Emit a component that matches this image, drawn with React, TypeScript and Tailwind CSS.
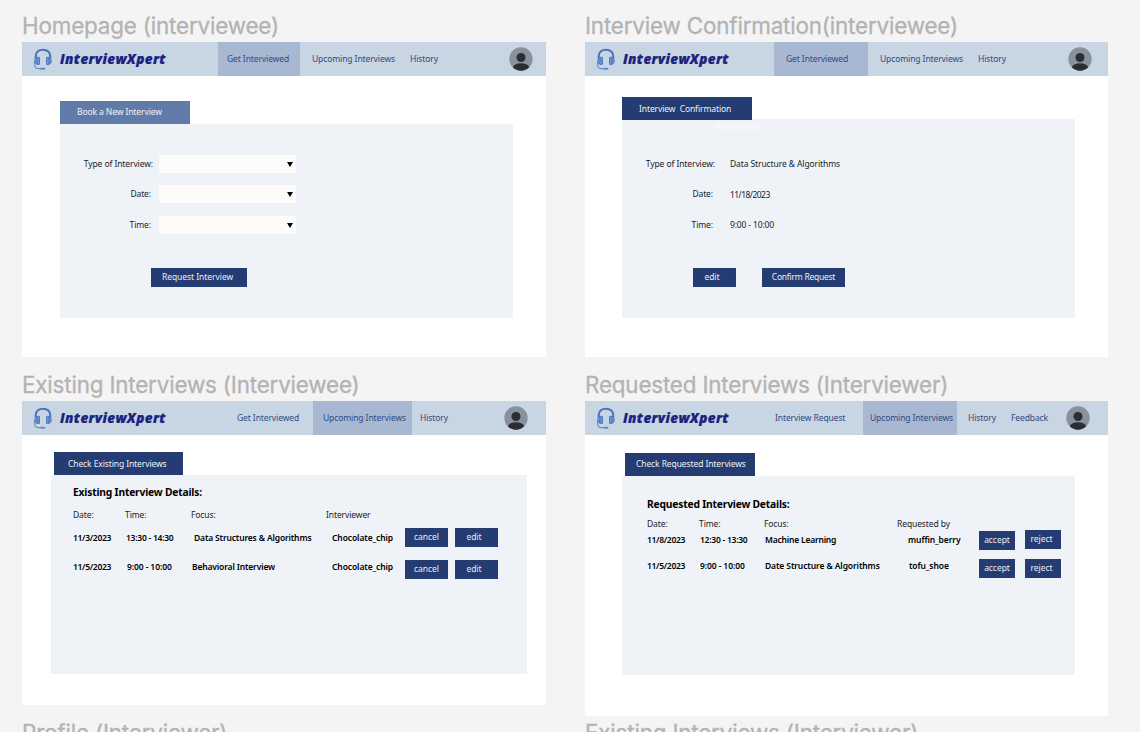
import type { ReactNode } from "react";

function Headset() {
  return (
    <svg viewBox="0 0 18 22" className="ml-[12px] h-[22px] w-[18px] shrink-0" fill="none">
      <path d="M1.7 10.5V8.6C1.7 4.4 4.6 1.7 9 1.7s7.3 2.7 7.3 6.9v1.9" stroke="#4a72bd" strokeWidth="2.1" />
      <path d="M3 9.8Q.6 10.2.6 13q0 2.8 2.4 3.2z" fill="#7fa6de" stroke="#4a72bd" strokeWidth=".8" />
      <rect x="3" y="9.3" width="2.5" height="7.2" rx=".4" fill="#6d96d4" stroke="#4a72bd" strokeWidth=".9" />
      <rect x="12.5" y="9.3" width="2.5" height="7.2" rx=".4" fill="#6d96d4" stroke="#4a72bd" strokeWidth=".9" />
      <path d="M15 9.8q2.4.4 2.4 3.2 0 2.8-2.4 3.2z" fill="#6d96d4" stroke="#4a72bd" strokeWidth=".8" />
      <path d="M.8 13.5v4.7q.1 2.4 3.6 2.5H7" stroke="#4a72bd" strokeWidth=".9" />
      <rect x="6.4" y="19.8" width="5" height="1.9" rx=".95" fill="#5f8bd0" />
    </svg>
  );
}

function Avatar({ className }: { className: string }) {
  return (
    <svg viewBox="0 0 24 24" className={`h-[24px] w-[24px] shrink-0 ${className}`}>
      <clipPath id="face"><circle cx="12" cy="12" r="11.7" /></clipPath>
      <circle cx="12" cy="12" r="11.7" fill="#89929c" />
      <g clipPath="url(#face)" fill="#2a2d32">
        <circle cx="12" cy="10.5" r="4.5" />
        <ellipse cx="12" cy="20.3" rx="8" ry="4" />
      </g>
    </svg>
  );
}

function Title({ className, children }: { className: string; children: string }) {
  return <h2 className={`whitespace-nowrap font-[Inter,sans-serif] text-[22.4px] font-normal leading-[32px] tracking-[-0.17px] text-[#b3b3b3] [-webkit-text-stroke:0.3px_#b3b3b3] ${className}`}>{children}</h2>;
}

function Artboard({ title, titleClass, className, nav, children }: {
  title: string; titleClass: string; className: string; nav: ReactNode; children: ReactNode;
}) {
  return (
    <section>
      <Title className={titleClass}>{title}</Title>
      <div className={`bg-white ${className}`}>
        <header className="flex h-[34px] items-center bg-[#c8d5e3]">
          <Headset />
          <span className="ml-[8px] w-[106px] shrink-0 whitespace-nowrap text-[13.5px] font-extrabold italic leading-[20px] tracking-[0.35px] text-[#1a237e] [-webkit-text-stroke:0.2px_#1a237e] [font-family:'Open_Sans',sans-serif]">InterviewXpert</span>
          {nav}
        </header>
        {children}
      </div>
    </section>
  );
}

function NavItem({ className, children }: { className: string; children: string }) {
  return <a className={`flex h-full shrink-0 items-center whitespace-nowrap pb-px text-[#2f4a85] ${className}`}>{children}</a>;
}

function Tab({ className, children }: { className: string; children: string }) {
  return <div className={`flex h-[23px] items-center whitespace-pre text-[#eef2f8] ${className}`}>{children}</div>;
}

function Button({ className, children }: { className: string; children: string }) {
  return <button className={`flex h-[19px] shrink-0 items-center justify-center whitespace-nowrap bg-[#243c72] pb-px text-[8.5px] font-normal tracking-[-0.05px] text-[#e9edf5] ${className}`}>{children}</button>;
}

function Cell({ className, children }: { className: string; children: string }) {
  return <span className={`shrink-0 whitespace-nowrap ${className}`}>{children}</span>;
}

function Select({ label, className }: { label: string; className: string }) {
  return (
    <div className={`flex h-[18px] items-center ${className}`}>
      <label className={label === "Type of Interview:" ? "w-[93px] text-right" : "w-[91px] text-right"}>{label}</label>
      <div className={`flex h-[18px] w-[137px] items-center justify-end bg-[#fdfcfb] pr-[3px] ${label === "Type of Interview:" ? "ml-[6px]" : "ml-[8px]"}`}>
        <svg viewBox="0 0 6 5" className="h-[5px] w-[6px]"><path d="M0 0h6L3 5z" fill="#000" /></svg>
      </div>
    </div>
  );
}

export default function App() {
  return (
    <main className="flex h-[732px] w-[1140px] gap-[39px] overflow-hidden bg-[#f4f4f4] pl-[22px] pt-[10px] font-['Noto_Sans',sans-serif] text-[8.5px] leading-[12px] tracking-[-0.1px] text-[#202226]">
      <div className="w-[524px] shrink-0">
        <Artboard title="Homepage (interviewee)" titleClass="" className="h-[315px]" nav={
          <>
            <NavItem className="ml-[52px] w-[82px] bg-[#a8b8d3] pl-[9px]">Get Interviewed</NavItem>
            <NavItem className="ml-[12px] w-[83px]">Upcoming Interviews</NavItem>
            <NavItem className="ml-[15px] w-[28px]">History</NavItem>
            <Avatar className="ml-[71px]" />
          </>
        }>
          <div className="pl-[38px] pt-[25px]">
            <Tab className="w-[130px] bg-[#617ba9] pb-px pl-[17px]">Book a New Interview</Tab>
            <div className="h-[194px] w-[453px] bg-[#eff3f8] pt-[31px]">
              <Select label="Type of Interview:" className="" />
              <Select label="Date:" className="mt-[12px]" />
              <Select label="Time:" className="mt-[13px]" />
              <Button className="ml-[91px] mt-[34px] w-[96px] pr-[3px]">Request Interview</Button>
            </div>
          </div>
        </Artboard>

        <Artboard title="Existing Interviews (Interviewee)" titleClass="mt-[12px]" className="h-[304px]" nav={
          <>
            <NavItem className="ml-[71px] w-[63px]">Get Interviewed</NavItem>
            <NavItem className="ml-[13px] w-[99px] bg-[#a8b8d3] pl-[10px]">Upcoming Interviews</NavItem>
            <NavItem className="ml-[8px] w-[28px]">History</NavItem>
            <Avatar className="ml-[56px]" />
          </>
        }>
          <div className="pl-[29px] pt-[17px]">
            <Tab className="ml-[3px] w-[129px] bg-[#243c72] pl-[14px]">Check Existing Interviews</Tab>
            <div className="h-[199px] w-[476px] bg-[#eff3f8] pl-[22px] pt-[10px]">
              <h3 className="text-[10.3px] font-bold leading-[14px] tracking-[-0.2px] text-black">Existing Interview Details:</h3>
              <div className="mt-[10px] flex">
                <Cell className="w-[52px]">Date:</Cell>
                <Cell className="w-[66px]">Time:</Cell>
                <Cell className="w-[135px]">Focus:</Cell>
                <Cell className="">Interviewer</Cell>
              </div>
              <div className="mt-[7px] flex h-[19px] items-center font-semibold text-black">
                <Cell className="w-[53px] tracking-[-0.3px]">11/3/2023</Cell>
                <Cell className="w-[68px] tracking-[-0.25px]">13:30 - 14:30</Cell>
                <Cell className="w-[138px] tracking-[-0.15px]">Data Structures &amp; Algorithms</Cell>
                <Cell className="w-[73px]">Chocolate_chip</Cell>
                <Button className="w-[43px]">cancel</Button>
                <Button className="ml-[7px] w-[43px] pr-[5px]">edit</Button>
              </div>
              <div className="mt-[13px] flex h-[19px] items-center font-semibold text-black">
                <Cell className="mb-[5px] w-[54px] tracking-[-0.3px]">11/5/2023</Cell>
                <Cell className="mb-[5px] w-[65px]">9:00 - 10:00</Cell>
                <Cell className="mb-[5px] w-[140px] tracking-[-0.15px]">Behavioral Interview</Cell>
                <Cell className="mb-[5px] w-[73px]">Chocolate_chip</Cell>
                <Button className="w-[43px]">cancel</Button>
                <Button className="ml-[7px] w-[43px] pr-[5px]">edit</Button>
              </div>
            </div>
          </div>
        </Artboard>

        <Title className="mt-[12px]">Profile (Interviewer)</Title>
      </div>

      <div className="w-[523px] shrink-0">
        <Artboard title="Interview Confirmation(interviewee)" titleClass="" className="h-[315px]" nav={
          <>
            <NavItem className="ml-[45px] w-[94px] bg-[#a8b8d3] pl-[12px]">Get Interviewed</NavItem>
            <NavItem className="ml-[12px] w-[83px]">Upcoming Interviews</NavItem>
            <NavItem className="ml-[15px] w-[28px]">History</NavItem>
            <Avatar className="ml-[62px]" />
          </>
        }>
          <div className="pl-[37px] pt-[21px]">
            <Tab className="relative z-10 w-[130px] bg-[#243c72] pl-[17px]">Interview  Confirmation</Tab>
            <div className="-mt-px h-[199px] w-[453px] bg-[#eff3f8] pt-[2px]">
              <p className="ml-[93px] text-[#f9fbfd]">Interviewer</p>
              <div className="mt-[25px] flex">
                <Cell className="w-[93px] text-right">Type of Interview:</Cell>
                <Cell className="ml-[15px]">Data Structure &amp; Algorithms</Cell>
              </div>
              <div className="mt-[18px] flex">
                <Cell className="w-[91px] text-right">Date:</Cell>
                <Cell className="ml-[17px] pt-px tracking-[-0.55px]">11/18/2023</Cell>
              </div>
              <div className="mt-[18px] flex">
                <Cell className="w-[91px] text-right">Time:</Cell>
                <Cell className="ml-[17px] tracking-[-0.15px]">9:00 - 10:00</Cell>
              </div>
              <div className="mt-[37px] flex">
                <Button className="ml-[71px] w-[43px] pr-[5px]">edit</Button>
                <Button className="ml-[26px] w-[83px] tracking-[-0.25px]">Confirm Request</Button>
              </div>
            </div>
          </div>
        </Artboard>

        <Artboard title="Requested Interviews (Interviewer)" titleClass="mt-[12px]" className="h-[315px]" nav={
          <>
            <NavItem className="ml-[46px] w-[71px]">Interview Request</NavItem>
            <NavItem className="ml-[17px] w-[94px] bg-[#a8b8d3] pl-[7px]">Upcoming Interviews</NavItem>
            <NavItem className="ml-[11px] w-[28px]">History</NavItem>
            <NavItem className="ml-[15px] w-[38px]">Feedback</NavItem>
            <Avatar className="ml-[17px]" />
          </>
        }>
          <div className="pl-[37px] pt-[18px]">
            <Tab className="ml-[3px] w-[130px] bg-[#243c72] pb-px pl-[11px]">Check Requested Interviews</Tab>
            <div className="h-[199px] w-[453px] bg-[#eff3f8] pl-[25px] pt-[21px]">
              <h3 className="text-[10.3px] font-bold leading-[14px] tracking-[-0.2px] text-black">Requested Interview Details:</h3>
              <div className="mt-[7px] flex">
                <Cell className="w-[52px]">Date:</Cell>
                <Cell className="w-[65px]">Time:</Cell>
                <Cell className="w-[133px]">Focus:</Cell>
                <Cell className="">Requested by</Cell>
              </div>
              <div className="flex h-[20px] items-center font-semibold text-black">
                <Cell className="w-[53px] tracking-[-0.3px]">11/8/2023</Cell>
                <Cell className="w-[65px] tracking-[-0.25px]">12:30 - 13:30</Cell>
                <Cell className="w-[143px] tracking-[-0.2px]">Machine Learning</Cell>
                <Cell className="w-[71px]">muffin_berry</Cell>
                <Button className="w-[36px]">accept</Button>
                <Button className="mb-px ml-[10px] w-[36px] pr-[3px]">reject</Button>
              </div>
              <div className="mt-[8px] flex h-[20px] items-center font-semibold text-black">
                <Cell className="mb-[4px] w-[53px] tracking-[-0.3px]">11/5/2023</Cell>
                <Cell className="mb-[4px] w-[65px]">9:00 - 10:00</Cell>
                <Cell className="mb-[4px] w-[144px]">Date Structure &amp; Algorithms</Cell>
                <Cell className="mb-[4px] w-[70px]">tofu_shoe</Cell>
                <Button className="w-[36px]">accept</Button>
                <Button className="ml-[10px] w-[36px] pr-[3px]">reject</Button>
              </div>
            </div>
          </div>
        </Artboard>

        <Title className="mt-px">Existing Interviews (Interviewer)</Title>
      </div>
    </main>
  );
}
